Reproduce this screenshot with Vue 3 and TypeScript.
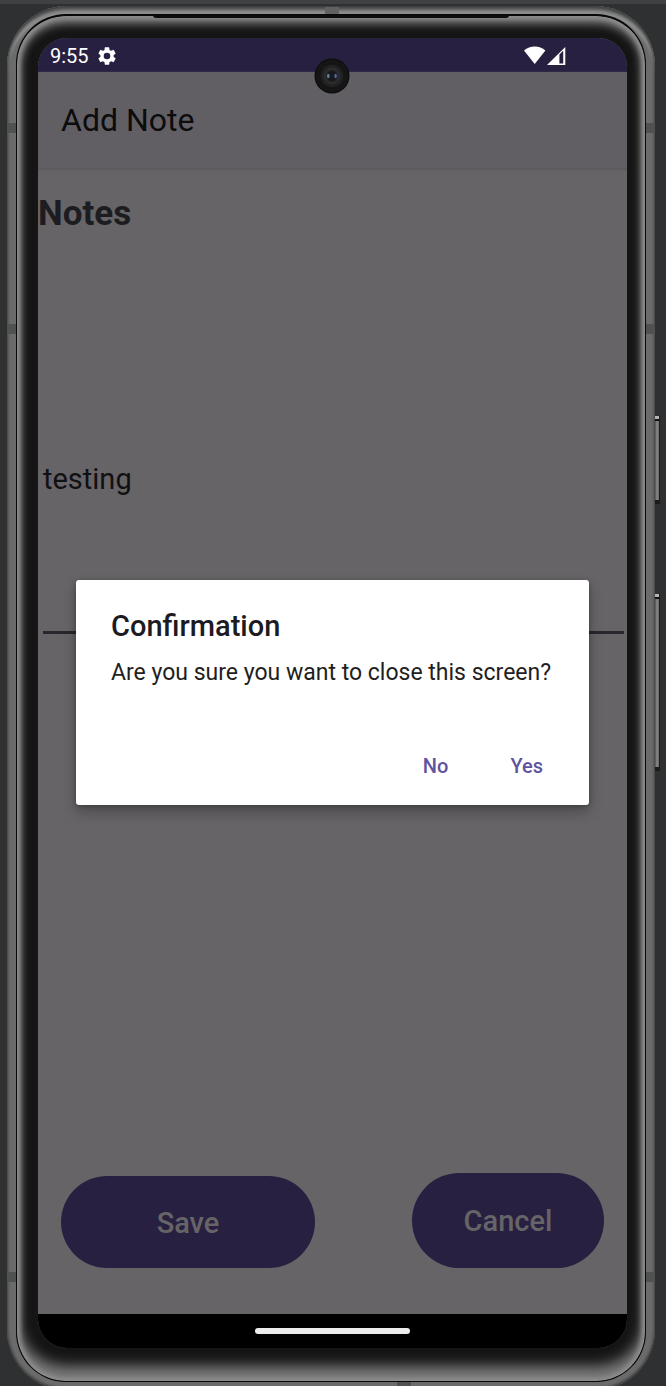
<script setup lang="ts">
import { ref } from 'vue'

const time = ref('9:55')
const note = ref('testing')
const actions: string[] = ['No', 'Yes']
</script>

<template>
  <main class="stage">
    <div class="side-key key-power"></div>
    <div class="side-key key-volume"></div>
    <div class="frame">
      <i class="band band-top"></i>
      <i class="band left b1"></i><i class="band left b2"></i><i class="band left b3"></i>
      <i class="band right b1"></i><i class="band right b2"></i><i class="band right b3"></i>
      <i class="band band-bottom"></i>
      <div class="bezel">
        <i class="speaker"></i>
        <div class="screen">
          <header class="status">
            <span class="time">{{ time }}</span>
            <svg class="gear" width="22" height="22" viewBox="0 0 24 24">
              <path fill="#fff" d="M19.14 12.94c.04-.3.06-.61.06-.94s-.02-.64-.07-.94l2.03-1.58a.49.49 0 0 0 .12-.61l-1.92-3.32a.49.49 0 0 0-.59-.22l-2.39.96a7 7 0 0 0-1.62-.94l-.36-2.54A.48.48 0 0 0 13.92 2.4h-3.84c-.24 0-.43.17-.47.41l-.36 2.54c-.59.24-1.13.57-1.62.94l-2.39-.96a.48.48 0 0 0-.59.22L2.74 8.87a.47.47 0 0 0 .12.61l2.03 1.58c-.05.3-.09.63-.09.94s.02.64.07.94l-2.03 1.58a.49.49 0 0 0-.12.61l1.92 3.32c.12.22.37.29.59.22l2.39-.96c.5.38 1.03.7 1.62.94l.36 2.54c.05.24.24.41.48.41h3.84c.24 0 .44-.17.47-.41l.36-2.54a7 7 0 0 0 1.62-.94l2.39.96c.22.08.47 0 .59-.22l1.92-3.32a.47.47 0 0 0-.12-.61zM12 15.6a3.6 3.6 0 1 1 0-7.2 3.6 3.6 0 0 1 0 7.2z" />
            </svg>
            <svg class="signals" width="42" height="20" viewBox="0 0 42 20">
              <path fill="#fff" d="M0 4.6C6-.9 15.500-.9 21.400 4.600L10.700 18z" />
              <path fill="#fff" fill-rule="evenodd" d="M23 19 41.300 1v18zM35.400 8.500v8.900h3.800V4.800z" />
            </svg>
          </header>
          <div class="toolbar">Add Note</div>
          <section class="content">
            <h1>Notes</h1>
            <div class="field">{{ note }}</div>
            <div class="buttons">
              <button class="save">Save</button>
              <button class="cancel">Cancel</button>
            </div>
          </section>
          <footer class="nav"><span></span></footer>

          <div class="dialog">
            <h2>Confirmation</h2>
            <p>Are you sure you want to close this screen?</p>
            <div class="actions">
              <button v-for="a in actions" :key="a">{{ a }}</button>
            </div>
          </div>
          <svg class="camera" width="36" height="36" viewBox="0 0 36 36">
            <circle cx="18" cy="18" r="17.500" fill="#0b0b0b" />
            <circle cx="18" cy="18" r="16.500" fill="#151515" />
            <circle cx="18" cy="18" r="11.300" fill="#212122" />
            <circle cx="18" cy="18" r="8.500" fill="#2b2c2e" />
            <circle cx="18" cy="18" r="5.600" fill="#17191f" />
            <ellipse cx="14.300" cy="18" rx="1.300" ry="2.200" fill="#5e8688" />
            <ellipse cx="21.600" cy="18" rx="1.300" ry="2.200" fill="#5567a0" />
          </svg>
        </div>
      </div>
    </div>
  </main>
</template>

<style>
html, body { margin: 0; background: #2e3032; }
</style>

<style scoped>
* { box-sizing: border-box; }
.stage {
  position: relative;
  width: 666px;
  height: 1386px;
  overflow: hidden;
  padding: 2px 0 0 7px;
  border-top: 4px solid #3f4142;
  background: #2e3032;
  font-family: Roboto, sans-serif;
}
.side-key {
  position: absolute;
  left: 655px;
  width: 5px;
  border: solid #1a1b1b;
  border-width: 0 1px 4px 0;
  background: linear-gradient(#b5b5b5 0 3px, #111 3px 5px, transparent 5px),
    linear-gradient(90deg, #4c4d4d, #878787 45%, #6c6c6c);
}
.key-power { top: 412px; height: 88px; }
.key-volume { top: 590px; height: 177px; }
.frame {
  position: relative;
  width: 648px;
  height: 1384px;
  padding: 8px 9px 5px 9px;
  border-radius: 60px;
  background: #6b6b6b;
  box-shadow: inset 0 0 3px 1px #3c3d3d, inset 0 -2px 2px #505050, inset 0 7px 4px -3px #474848, inset 0 9px 3px #979797;
}
.bezel {
  position: relative;
  width: 630px;
  height: 1368px;
  padding: 24px 18px 0 22px;
  border: 1px solid #080808;
  border-top-width: 2px;
  border-radius: 50px;
  background: #151515;
  box-shadow: inset 0 0 4px 3px #8e8e8e, inset 0 6px 9px 2px #777, inset 0 -14px 13px 1px #7b7b7b;
}
.speaker {
  position: absolute;
  top: -1px;
  left: 136px;
  width: 356px;
  height: 3px;
  border-radius: 0 0 6px 6px;
  background: #0b0b0b;
}
.band { position: absolute; background: #505151; }
.band.left { left: 0; width: 9px; height: 10px; }
.band.right { right: 0; width: 9px; height: 10px; }
.b1 { top: 117px; }
.b2 { top: 318px; }
.b3 { top: 1266px; }
.band-top { top: 1px; left: 318px; width: 14px; height: 8px; background: #616161; }
.band-bottom { top: 1376px; left: 390px; width: 14px; height: 5px; }
.screen {
  position: relative;
  display: flex;
  flex-direction: column;
  width: 589px;
  height: 1310px;
  margin-left: -1px;
  margin-top: -2px;
  border-radius: 29px;
  overflow: hidden;
  background: #666467;
}
.status {
  display: flex;
  align-items: center;
  flex: 0 0 34px;
  padding: 1px 61px 0 12px;
  background: #282041;
  color: #fff;
  font-size: 20px;
}
.time { width: 39px; }
.gear { margin-left: 7px; }
.signals { margin-left: auto; }
.toolbar {
  flex: 0 0 93px;
  padding-left: 23px;
  background: #615f64;
  border-bottom: 1px solid #5b595b;
  box-shadow: 0 1px 3px #5d5b5d;
  color: #0c0c0d;
  font-size: 32px;
  line-height: 96px;
}
.content {
  flex: 1;
  display: flex;
  flex-direction: column;
}
h1 {
  margin: 24px 0 0;
  color: #1d1c20;
  font-size: 35px;
  font-weight: 700;
  line-height: 42px;
}
.field {
  height: 399px;
  margin: 0 3px 0 5px;
  padding-top: 223px;
  border-bottom: 3px solid #29272e;
  color: #111012;
  font-size: 29px;
  line-height: 42px;
}
.buttons {
  display: flex;
  align-items: flex-end;
  justify-content: space-between;
  margin-top: auto;
  padding: 0 23px 46px;
}
button {
  padding: 0;
  border: 0;
  background: none;
  font-family: inherit;
  font-weight: 500;
}
.save, .cancel {
  border-radius: 48px;
  background: #282041;
  color: #666467;
  font-size: 29px;
}
.save { width: 254px; height: 92px; padding-top: 2px; }
.cancel { width: 192px; height: 95px; }
.nav {
  display: flex;
  flex: 0 0 34px;
  justify-content: center;
  background: #000;
}
.nav span {
  width: 155px;
  height: 6px;
  margin-top: 14px;
  border-radius: 3px;
  background: #ececec;
}
.dialog {
  position: absolute;
  left: 38px;
  top: 542px;
  width: 513px;
  height: 225px;
  padding: 28px 35px 0;
  border-radius: 3px;
  background: #fff;
  box-shadow: 0 7px 14px rgba(0, 0, 0, .27), 0 1px 4px rgba(0, 0, 0, .25);
}
h2 {
  margin: 0;
  color: #1c1b1f;
  font-size: 29px;
  font-weight: 500;
  line-height: 36px;
}
p {
  margin: 13px 0 0;
  color: #1f1e21;
  font-size: 23px;
  line-height: 32px;
  white-space: nowrap;
}
.actions {
  display: flex;
  justify-content: flex-end;
  gap: 62px;
  margin-top: 61px;
  padding-right: 11px;
}
.actions button {
  color: #62529f;
  font-size: 20px;
  line-height: 32px;
}
.camera { position: absolute; left: 276px; top: 20px; }
</style>
